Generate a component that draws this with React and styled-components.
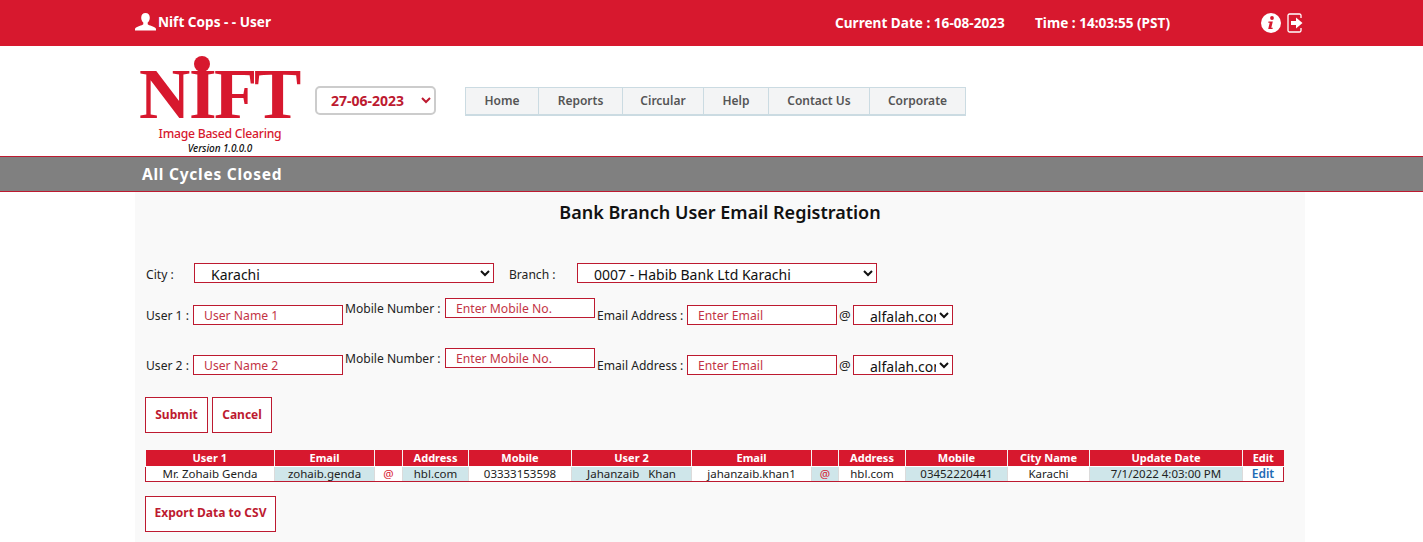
import React from "react";
import styled, { createGlobalStyle } from "styled-components";

const RED = "#d7182e";
const LINE = "#bd1a30";
const FONT = `"Noto Sans", "Open Sans", sans-serif`;

const Global = createGlobalStyle`
  html, body { margin: 0; padding: 0; background: #fff; }
  body { font-family: ${FONT}; font-size: 12px; color: #111; overflow: hidden; }
  * { box-sizing: border-box; }
`;

const TopBar = styled.div`
  height: 46px; background: ${RED}; color: #fff; font-weight: 700; font-size: 13.6px;
  display: flex; align-items: center; padding: 0 120px 2px 135px;
`;
const UserBlock = styled.div`display: flex; align-items: center; gap: 2px; width: 700px; margin-top: -1px;`;
const DateText = styled.span`width: 200px; white-space: nowrap;`;
const TimeText = styled.span`width: 226px; white-space: nowrap;`;
const IconRow = styled.div`display: flex; align-items: center; gap: 6px; margin-top: 2px;`;

const Header = styled.div`
  height: 110px; padding: 10px 0 0 139px; display: flex; align-items: flex-start;
`;
const Brand = styled.div`width: 162px; display: flex; flex-direction: column; align-items: center;`;
const LogoSvg = styled.svg`display: block; overflow: visible;`;
const BrandSub = styled.div`color: ${RED}; font-size: 12.2px; font-weight: 500; line-height: 15px; margin-top: 5px; letter-spacing: -0.25px; white-space: nowrap;`;
const BrandVer = styled.div`color: #111; font-size: 10px; font-style: italic; font-weight: 500; line-height: 13px; margin-top: 1px; letter-spacing: -0.1px;`;

const CycleSelect = styled.select`
  width: 121px; height: 29px; margin: 30px 0 0 14px; border: 2px solid #ccc; border-radius: 5px;
  color: ${LINE}; background: #fff; font: 700 14px ${FONT}; padding-left: 10px; outline: none;
`;

const Menu = styled.nav`
  display: flex; margin: 31px 0 0 29px; height: 29px; background: #f3f4f5;
  border: 1px solid #cbdbe2; border-bottom-width: 2px;
`;
const MenuItem = styled.div`
  width: ${(p) => p.$w}px; display: flex; align-items: center; justify-content: center; padding-bottom: 2px;
  color: #555; font-size: 12px; font-weight: 600; border-left: ${(p) => (p.$first ? "none" : "1px solid #cbdbe2")};
`;

const CycleBar = styled.div`
  height: 36px; background: #808080; border-top: 1px solid ${LINE}; border-bottom: 1px solid ${LINE};
  color: #fff; font-weight: 700; font-size: 15.5px; letter-spacing: 0.75px;
  display: flex; align-items: center; padding-left: 142px;
`;

const Page = styled.main`
  margin: 0 118px 0 135px; height: 350px; background: #f9f9f9; padding: 9px 0 0 10px;
`;
const Title = styled.h1`
  margin: 0 0 0 -10px; text-align: center; font-size: 18px; font-weight: 600; line-height: 22px; color: #111;
`;
const Row = styled.div`display: flex; align-items: ${(p) => p.$align || "center"};`;
const CityRow = styled(Row)`margin-top: 39px; height: 22px;`;
const UserRow = styled(Row)`height: 35px; margin-top: ${(p) => p.$mt}px; align-items: flex-start;`;
const Label = styled.label`
  font-size: ${(p) => p.$fs || 12.1}px; white-space: nowrap; color: #222; width: ${(p) => p.$w}px; margin-top: ${(p) => p.$mt || 0}px; line-height: 22px;
  height: 20px; padding-left: ${(p) => p.$pl || 0}px; flex: none;
`;
const Field = styled.select`
  width: ${(p) => p.$w}px; height: 20px; border: 1px solid ${LINE}; background: #fff; padding: 0 0 0 12px;
  font: 14px ${FONT}; color: #111; border-radius: 0; outline: none; flex: none; margin-top: ${(p) => p.$mt || 0}px;
  margin-left: ${(p) => p.$ml || 0}px;
`;
const Input = styled.input`
  width: 150px; height: 20px; border: 1px solid ${LINE}; background: #fff; padding: 0 10px; flex: none;
  font: 12.2px ${FONT}; color: ${LINE}; outline: none; margin-top: ${(p) => p.$mt}px;
  &::placeholder { color: ${LINE}; opacity: 0.9; }
`;
const Buttons = styled.div`display: flex; gap: 4px; margin-top: 15px;`;
const OutlineButton = styled.button`
  height: 36px; padding: 0 0 2px; background: #fff; border: 1px solid ${LINE}; color: ${LINE}; white-space: nowrap;
  font: 700 12px ${FONT}; width: ${(p) => p.$w}px;
`;
const Grid = styled.table`
  border-collapse: collapse; table-layout: fixed; width: 1138px; margin-top: 17px; font-size: 11.5px;
  th { background: ${RED}; color: #fff; height: 16px; padding: 0; font-size: 11px; font-weight: 700; line-height: 15px; border-left: 1px solid #f4f4f4; border-bottom: 1px solid #fff; }
  th:first-child { border-left: 0; }
  td { height: 15px; padding: 0; text-align: center; line-height: 14px; color: #222; white-space: pre; border-left: 1px solid #dbdbdb; border-bottom: 1px solid ${LINE}; }
  td:first-child { border-left: 1px solid ${LINE}; }
  td:last-child { border-right: 1px solid ${LINE}; }
`;
const Cell = styled.td`background: ${(p) => (p.$tint ? "#cfe6ea" : "#fff")};`;
const AtCell = styled(Cell)`&& { color: ${RED}; }`;
const EditCell = styled.td`&& { color: #1f6bb5; font-weight: 600; font-size: 12px; background: #fff; }`;
const Export = styled(OutlineButton)`display: block; margin-top: 14px;`;

const UserIcon = () => (
  <svg width="21" height="18" viewBox="0 0 21 18" fill="#fff">
    <path d="M10.5 0c2.7 0 4.3 2 4.3 4.8 0 2-.9 3.8-2.1 4.8v1.3c0 .7 1 1 2.6 1.6 2.6 1 5.2 1.7 5.7 3.3.1.7 0 1.7 0 1.7H0s-.1-1 0-1.7c.5-1.6 3.1-2.3 5.7-3.3 1.6-.6 2.6-.9 2.6-1.6V9.6C7.1 8.6 6.2 6.8 6.2 4.8 6.2 2 7.8 0 10.5 0z" />
  </svg>
);
const InfoIcon = () => (
  <svg width="20" height="20" viewBox="0 0 20 20">
    <circle cx="10" cy="10" r="10" fill="#fff" />
    <circle cx="11" cy="5" r="1.9" fill={RED} />
    <path d="M7.5 8.5h4.3l-1.5 6.2h1.5l-.3 1.3H7.2l1.5-6.2H7.2z" fill={RED} />
  </svg>
);
const LogoutIcon = () => (
  <svg width="16" height="20" viewBox="0 0 16 20" fill="none">
    <path d="M14 5V2.5A1.5 1.5 0 0 0 12.5 1h-10A1.5 1.5 0 0 0 1 2.5v15A1.5 1.5 0 0 0 2.5 19h10a1.5 1.5 0 0 0 1.5-1.5V15" stroke="#fff" strokeWidth="1.3" />
    <path d="M4 8h5V4.5L15.5 10 9 15.5V12H4z" fill="#fff" />
  </svg>
);

const Logo = () => (
  <LogoSvg width="162" height="65" viewBox="0 0 162 65">
    <circle cx="63" cy="8" r="8" fill={RED} />
    <text x="0 50 75 115" y="62" fontFamily="Liberation Serif, serif" fontWeight="700" fontSize="71" fill={RED}>NIFT</text>
  </LogoSvg>
);

const menu = [["Home", 72], ["Reports", 84], ["Circular", 81], ["Help", 65], ["Contact Us", 101], ["Corporate", 96]];
const heads = [["User 1", 129], ["Email", 100], ["", 28], ["Address", 66], ["Mobile", 103], ["User 2", 120], ["Email", 120], ["", 27], ["Address", 67], ["Mobile", 102], ["City Name", 82], ["Update Date", 153], ["Edit", 41]];

const UserLine = ({ n, mt }) => (
  <UserRow $mt={mt}>
    <Label $w={48} $mt={8} $pl={1}>User {n} :</Label>
    <Input $mt={8} placeholder={`User Name ${n}`} />
    <Label $w={102} $mt={1} $pl={2}>Mobile Number :</Label>
    <Input $mt={1} placeholder="Enter Mobile No." />
    <Label $w={92} $mt={8} $pl={2}>Email Address :</Label>
    <Input $mt={8} placeholder="Enter Email" />
    <Label $w={16} $mt={7} $pl={2} $fs={13}>@</Label>
    <Field $w={100} $mt={8} defaultValue="a"><option value="a">alfalah.com</option></Field>
  </UserRow>
);

export default function App() {
  return (
    <>
      <Global />
      <TopBar>
        <UserBlock><UserIcon /><span>Nift Cops - - User</span></UserBlock>
        <DateText>Current Date : 16-08-2023</DateText>
        <TimeText>Time : 14:03:55 (PST)</TimeText>
        <IconRow><InfoIcon /><LogoutIcon /></IconRow>
      </TopBar>
      <Header>
        <Brand>
          <Logo />
          <BrandSub>Image Based Clearing</BrandSub>
          <BrandVer>Version 1.0.0.0</BrandVer>
        </Brand>
        <CycleSelect defaultValue="d"><option value="d">27-06-2023</option></CycleSelect>
        <Menu>
          {menu.map(([t, w], i) => <MenuItem key={t} $w={w} $first={i === 0}>{t}</MenuItem>)}
        </Menu>
      </Header>
      <CycleBar>All Cycles Closed</CycleBar>
      <Page>
        <Title>Bank Branch User Email Registration</Title>
        <CityRow>
          <Label $w={49} $mt={2} $pl={1}>City :</Label>
          <Field $w={300}><option>Karachi</option></Field>
          <Label $w={68} $mt={2} $pl={15}>Branch :</Label>
          <Field $w={300} $ml={15}><option>0007 - Habib Bank Ltd Karachi</option></Field>
        </CityRow>
        <UserLine n={1} mt={13} />
        <UserLine n={2} mt={15} />
        <Buttons>
          <OutlineButton $w={63}>Submit</OutlineButton>
          <OutlineButton $w={60}>Cancel</OutlineButton>
        </Buttons>
        <Grid>
          <colgroup>{heads.map(([, w], i) => <col key={i} width={w} />)}</colgroup>
          <thead><tr>{heads.map(([t], i) => <th key={i}>{t}</th>)}</tr></thead>
          <tbody>
            <tr>
              <Cell>Mr. Zohaib Genda</Cell>
              <Cell $tint>zohaib.genda</Cell>
              <AtCell>@</AtCell>
              <Cell $tint>hbl.com</Cell>
              <Cell>03333153598</Cell>
              <Cell $tint>Jahanzaib   Khan</Cell>
              <Cell>jahanzaib.khan1</Cell>
              <AtCell $tint>@</AtCell>
              <Cell>hbl.com</Cell>
              <Cell $tint>03452220441</Cell>
              <Cell>Karachi</Cell>
              <Cell $tint>7/1/2022 4:03:00 PM</Cell>
              <EditCell>Edit</EditCell>
            </tr>
          </tbody>
        </Grid>
        <Export $w={131}>Export Data to CSV</Export>
      </Page>
    </>
  );
}
